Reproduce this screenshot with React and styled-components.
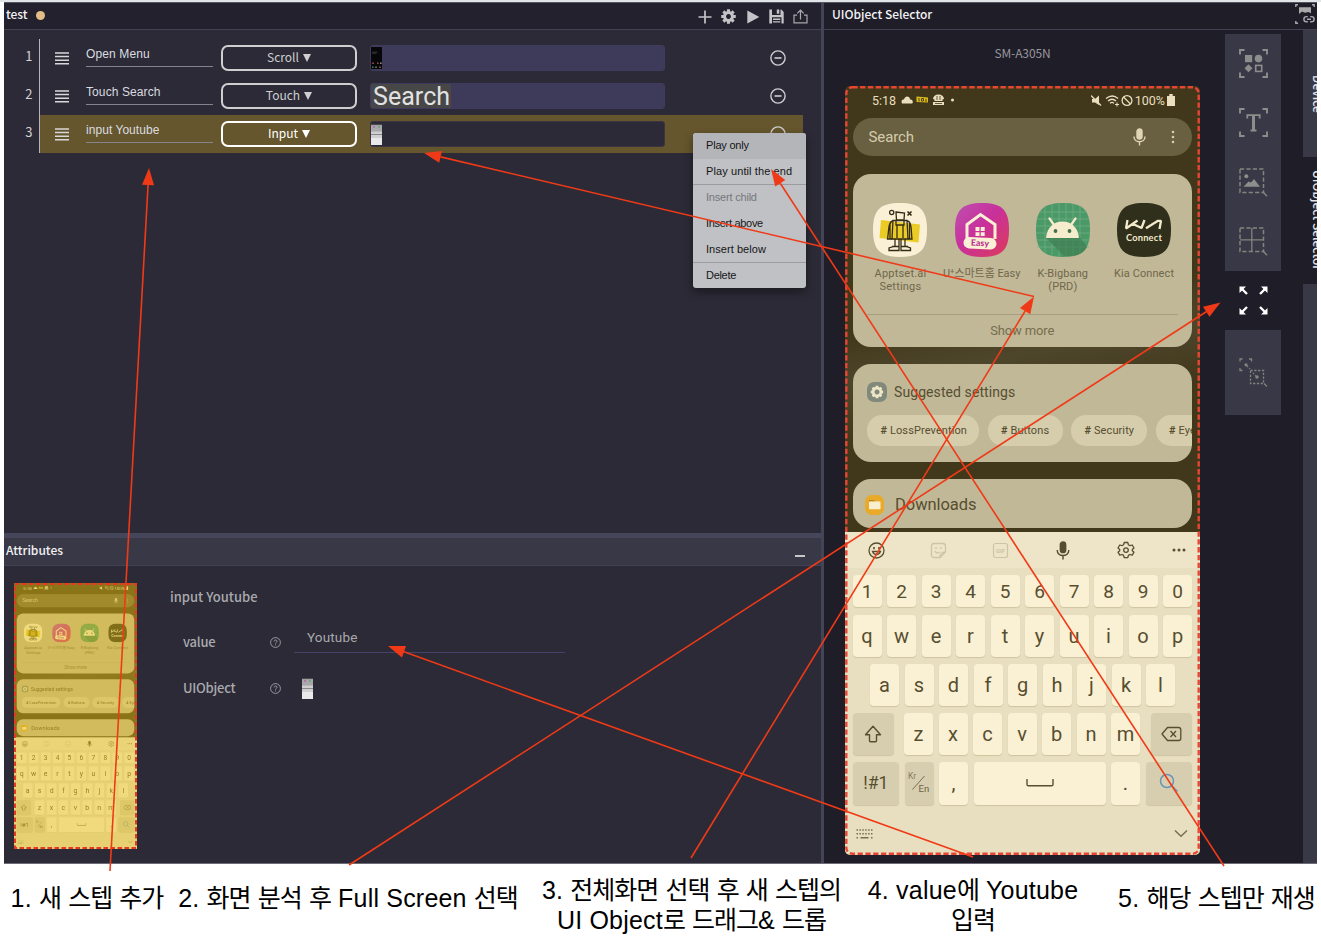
import React from "react";
import styled, { createGlobalStyle } from "styled-components";

const GlobalStyle = createGlobalStyle`
  * { box-sizing: border-box; }
  body { margin: 0; background: #fff; }
`;

const uiFont = `"Noto Sans CJK KR", "Noto Sans", sans-serif`;
const sysFont = `"Liberation Sans", Arial, sans-serif`;
const phoneFont = `Roboto, "Noto Sans CJK KR", sans-serif`;

/* ---------- shell ---------- */
const Page = styled.div`
  position: relative;
  width: 1321px;
  height: 942px;
  overflow: hidden;
  background: #fff;
  font-family: ${uiFont};
`;
const TopStrip = styled.div`
  height: 2px;
  background: #e2e5e8;
`;
const Workspace = styled.div`
  display: flex;
  height: 862px;
  margin: 0 4px;
  border-top: 1px solid #565562;
  border-bottom: 1px solid #6d6c77;
  background: #2b2a36;
`;
const LeftSide = styled.div`
  display: flex;
  flex-direction: column;
  width: 817px;
`;
const VerticalSplit = styled.div`
  width: 3px;
  background: #444459;
`;
const HorizontalSplit = styled.div`
  height: 5px;
  background: #46465b;
`;
const RightSide = styled.div`
  display: flex;
  flex-direction: column;
  flex: 1;
  background: #1f1d28;
`;
const Header = styled.header`
  display: flex;
  align-items: center;
  height: ${(p) => p.$h || 27}px;
  padding: 0 2px 4px;
  background: ${(p) => p.$bg};
  border-bottom: 1px solid #434254;
`;
const Title = styled.h2`
  margin: 0;
  padding-left: ${(p) => p.$pad || 0}px;
  font-size: 12px;
  font-weight: 500;
  line-height: 20px;
  letter-spacing: ${(p) => p.$ls || 0}px;
  color: #f2f2f4;
  white-space: nowrap;
`;
const DirtyDot = styled.span`
  width: 9px;
  height: 9px;
  margin: 3px 0 0 8px;
  border-radius: 50%;
  background: #e3bd88;
`;
const Toolbar = styled.div`
  display: flex;
  align-items: center;
  gap: 9.2px;
  margin: 5px 11px 0 auto;
`;

/* ---------- step list ---------- */
const Steps = styled.div`
  height: 503px;
  padding: 9px 18px 0 0;
`;
const Row = styled.div`
  display: flex;
  height: 38px;
`;
const RowNumber = styled.div`
  width: 36px;
  padding: 7px 6.5px 0 0;
  border-right: 1px solid #b5b5bb;
  text-align: right;
  font-size: 13px;
  line-height: 20px;
  color: #d3d3d6;
`;
const RowBody = styled.div`
  display: flex;
  align-items: center;
  flex: 1;
  padding: 0 17px 0 15px;
  background: ${(p) => (p.$active ? "#65562d" : "transparent")};
`;
const StepName = styled.div`
  width: 127px;
  height: 21px;
  margin: -3px 0 0 17px;
  border-bottom: 1px solid #85848c;
  font: 12px/16px ${sysFont};
  letter-spacing: ${(p) => p.$ls}px;
  color: #dcdce0;
`;
const ActionSelect = styled.div`
  width: 136px;
  height: 26px;
  margin-left: 8px;
  border: 2px solid ${(p) => (p.$active ? "#fff" : "#cfcfd1")};
  border-radius: 7px;
  text-align: center;
  font-size: 12px;
  line-height: 20px;
  color: ${(p) => (p.$active ? "#fff" : "#cfcfd1")};
`;
const Caret = styled.span`
  display: inline-block;
  width: 0;
  height: 0;
  margin-left: 4px;
  border: 4.5px solid transparent;
  border-top: 8px solid currentColor;
  border-bottom: 0;
`;
const ObjectSlot = styled.div`
  display: flex;
  align-items: center;
  width: 295px;
  height: 26px;
  margin: 0 auto 0 13px;
  border: 1px solid ${(p) => (p.$active ? "#3a3443" : "#3f3b5e")};
  border-radius: 3px;
  background: ${(p) => (p.$active ? "#2b2a36" : "#3e3a5a")};
`;
const SearchShot = styled.span`
  height: 24px;
  padding: 0 1px 0 2px;
  background: #474748;
  font: 25px/26px Roboto, sans-serif;
  letter-spacing: 0.05px;
  color: #e2e2e2;
`;

/* ---------- context menu ---------- */
const Menu = styled.div`
  position: absolute;
  left: 693px;
  top: 133px;
  width: 113px;
  height: 155px;
  overflow: hidden;
  border-radius: 3px;
  background: #c0c1c4;
  box-shadow: 0 4px 10px rgba(0, 0, 0, 0.4);
`;
const MenuItem = styled.div`
  height: 26px;
  padding-left: 13px;
  font: 11px/25px ${sysFont};
  letter-spacing: ${(p) => p.$ls || 0}px;
  color: ${(p) => (p.$disabled ? "#77777c" : "#161618")};
  background: ${(p) => (p.$hover ? "#b4b5b8" : "transparent")};
  border-bottom: ${(p) => (p.$rule ? "1px solid #9c9ca0" : "0")};
  white-space: nowrap;
`;

/* ---------- attributes ---------- */
const Attributes = styled.div`
  display: flex;
  flex: 1;
  padding: 17px 0 0 10px;
`;
const Minimize = styled.span`
  width: 10px;
  height: 2px;
  margin: 13px 14px 0 auto;
  background: #c6c6cb;
`;
const Thumb = styled.div`
  position: relative;
  width: 123px;
  height: 266px;
  overflow: hidden;
`;
const ThumbScale = styled.div`
  width: 355px;
  height: 769px;
  transform: scale(0.3465);
  transform-origin: 0 0;
`;
const Tint = styled.div`
  position: absolute;
  inset: 0;
  background: rgba(229, 190, 20, 0.45);
`;
const DashFrame = styled.svg`
  position: absolute;
  left: 0;
  top: 0;
`;
const Fields = styled.div`
  margin-left: 33px;
  color: #a9a9ad;
  font-weight: 500;
`;
const FieldTitle = styled.div`
  height: 26px;
  padding-top: 4px;
  font: 500 13px/20px ${uiFont};
`;
const Field = styled.div`
  display: flex;
  align-items: center;
  height: 46px;
  margin-top: ${(p) => p.$mt || 0}px;
  padding-left: 13px;
`;
const FieldLabel = styled.label`
  width: 87px;
  font-size: 13px;
  line-height: 20px;
  letter-spacing: -0.25px;
`;
const FieldInput = styled.div`
  width: 271px;
  height: 30px;
  margin: -8px 0 0 13px;
  padding-left: 13px;
  border-bottom: 1px solid #45426a;
  font: 13.5px/29px Roboto, sans-serif;
  letter-spacing: 0.15px;
`;

/* ---------- selector panel ---------- */
const SelectorBody = styled.div`
  display: flex;
  flex: 1;
  min-height: 0;
`;
const DeviceArea = styled.div`
  width: 355px;
  margin-left: 21px;
`;
const DeviceName = styled.div`
  height: 56px;
  padding: 12.5px 0 0 0;
  text-align: center;
  font-size: 12px;
  line-height: 20px;
  letter-spacing: -0.1px;
  color: #98979d;
`;
const PhoneHolder = styled.div`
  position: relative;
  width: 355px;
  height: 769px;
`;
const ToolColumn = styled.div`
  display: flex;
  flex-direction: column;
  width: 56px;
  margin: 4px 22px 0 25px;
`;
const ToolGroup = styled.div`
  background: ${(p) => (p.$plain ? "transparent" : "#393846")};
`;
const ToolCell = styled.div`
  display: flex;
  align-items: center;
  justify-content: center;
  height: ${(p) => p.$h || 59.25}px;
`;
const Tabs = styled.div`
  width: 14px;
  overflow: hidden;
`;
const Tab = styled.div`
  display: flex;
  justify-content: center;
  width: 31px;
  height: ${(p) => p.$h}px;
  writing-mode: vertical-rl;
  text-align: center;
  font-size: 12px;
  line-height: 31px;
  font-weight: 500;
  white-space: nowrap;
  color: #e6e6e8;
  background: ${(p) => (p.$active ? "#1f1d28" : "#393846")};
`;

/* ---------- phone ---------- */
const Phone = styled.div`
  display: flex;
  flex-direction: column;
  width: 355px;
  height: 769px;
  overflow: hidden;
  border-radius: 5px;
  background: linear-gradient(170deg, #41381b 30%, #4e462b 36%, #41381b 43%);
  font-family: ${phoneFont};
  color: #574e30;
`;
const StatusBar = styled.div`
  display: flex;
  flex: none;
  align-items: center;
  height: 32px;
  padding: 0 25px 4px 27px;
  font-size: 12.5px;
  color: #e9dfbf;
`;
const StatusGroup = styled.div`
  display: flex;
  align-items: center;
  gap: ${(p) => p.$gap}px;
`;
const Spacer = styled.div`
  flex: 1;
`;
const SearchBar = styled.div`
  display: flex;
  flex: none;
  align-items: center;
  height: 38px;
  margin: 0 8.5px 0 8px;
  padding: 0 14px 0 15.5px;
  border-radius: 19px;
  background: #686040;
  font-size: 15px;
  letter-spacing: -0.1px;
  color: #d6ccac;
`;
const DotsIcon = styled.svg`
  margin-left: 20px;
`;
const Card = styled.div`
  flex: none;
  height: ${(p) => p.$h}px;
  margin: ${(p) => p.$mt}px 8.5px 0 8px;
  border-radius: 18px;
  background: #c1b898;
  overflow: hidden;
`;
const AppGrid = styled.div`
  display: grid;
  grid-template-columns: repeat(4, 81.2px);
  justify-content: center;
  height: 140px;
  padding-top: 29px;
`;
const AppCell = styled.div`
  display: flex;
  flex-direction: column;
  align-items: center;
`;
const AppLabel = styled.div`
  margin-top: 9.5px;
  text-align: center;
  font-size: 11px;
  line-height: 13px;
  letter-spacing: ${(p) => p.$ls || 0.1}px;
  white-space: pre;
  color: #70674a;
`;
const ShowMore = styled.div`
  margin: 0 14px;
  border-top: 1px solid #a89f80;
  text-align: center;
  font-size: 13px;
  line-height: 32px;
  letter-spacing: -0.15px;
  color: #766d4e;
`;
const CardTitle = styled.div`
  display: flex;
  align-items: center;
  gap: ${(p) => p.$gap}px;
  height: ${(p) => p.$h}px;
  padding: ${(p) => p.$pad};
  font-size: ${(p) => p.$size}px;
  letter-spacing: ${(p) => p.$ls || 0}px;
`;
const Chips = styled.div`
  display: flex;
  gap: 8.5px;
  padding-left: 14px;
`;
const Chip = styled.div`
  flex: none;
  width: ${(p) => p.$w}px;
  height: 31px;
  padding-left: 13.5px;
  border-radius: 15px;
  background: #d6cdad;
  font-size: 11px;
  line-height: 31px;
  letter-spacing: 0.1px;
  white-space: nowrap;
  b { font-weight: 700; }
`;
const Keyboard = styled.div`
  flex: 1;
  margin-top: 4px;
  background: #e8dfc0;
`;
const KeyTools = styled.div`
  display: grid;
  grid-template-columns: repeat(5, 62.4px) 45px;
  justify-items: center;
  align-items: center;
  height: 36px;
  background: #eee5c8;
`;
const KeyRow = styled.div`
  display: flex;
  gap: 5.5px;
  height: ${(p) => p.$h}px;
  margin-top: ${(p) => p.$mt}px;
  padding-left: ${(p) => p.$pl || 7.5}px;
`;
const Key = styled.div`
  display: flex;
  align-items: center;
  justify-content: center;
  width: ${(p) => p.$w || 29}px;
  margin-left: ${(p) => p.$ml || 0}px;
  border-radius: 4px;
  background: ${(p) => (p.$dark ? "#d7ceaf" : "#faf1d4")};
  box-shadow: 0 1px 1px rgba(120, 105, 60, 0.22);
  font-size: ${(p) => p.$size || 20}px;
`;
const KeyFoot = styled.div`
  display: flex;
  align-items: center;
  justify-content: space-between;
  height: 58px;
  padding: 0 12px 0 11px;
`;

/* ---------- captions ---------- */
const Captions = styled.div`
  display: grid;
  grid-template-columns: 174px 348px 339px 224px 27px 209px;
  padding-top: 11px;
`;
const CaptionText = styled.p`
  margin: ${(p) => p.$mt || 0}px 0 0;
  grid-column: ${(p) => p.$col};
  grid-row: 1;
  text-align: center;
  font: 25px/30px "Liberation Sans", "Noto Sans CJK KR", sans-serif;
  letter-spacing: 0.2px;
  white-space: pre;
  color: #000;
`;
const Hangul = styled.span`
  letter-spacing: -1px;
`;
const Caption = ({ children, ...rest }) => (
  <CaptionText {...rest}>
    {children.split(/([가-힣]+)/).map((part, i) => (i % 2 ? <Hangul key={i}>{part}</Hangul> : part))}
  </CaptionText>
);
const ArrowLayer = styled.svg`
  position: absolute;
  left: 0;
  top: 0;
  pointer-events: none;
`;

/* ---------- icons ---------- */
const MenuLines = () => (
  <svg width="14" height="13" viewBox="0 0 14 13" stroke="#d8d8da" strokeWidth="1.5">
    <path d="M0 1H14M0 4.6H14M0 8.2H14M0 11.8H14" />
  </svg>
);
const MinusCircle = () => (
  <svg width="16" height="16" viewBox="0 0 16 16" fill="none" stroke="#cfcfd2" strokeWidth="1.4">
    <circle cx="8" cy="8" r="7.1" />
    <path d="M4.5 8H11.5" strokeWidth="1.6" />
  </svg>
);
const PlusIcon = () => (
  <svg width="14" height="14" viewBox="0 0 14 14" stroke="#c4c4c8" strokeWidth="1.7">
    <path d="M7 .5V13.5M.5 7H13.5" />
  </svg>
);
const teeth = (n, rIn, rOut, c) => {
  const pts = [];
  for (let i = 0; i < n; i++) {
    const a = (i * 2 * Math.PI) / n - Math.PI / 2;
    [[-0.3, rIn], [-0.2, rOut], [0.2, rOut], [0.3, rIn]].forEach(([d, r]) =>
      pts.push(`${(c + r * Math.cos(a + d)).toFixed(2)},${(c + r * Math.sin(a + d)).toFixed(2)}`)
    );
  }
  return `M${pts.join("L")}Z`;
};
const GearSolid = ({ size = 15, color = "#c4c4c8", hole = 2.6 }) => (
  <svg width={size} height={size} viewBox="0 0 16 16">
    <path
      fill={color}
      fillRule="evenodd"
      d={`${teeth(8, 5.8, 7.9, 8)}M8 ${8 - hole}a${hole} ${hole} 0 1 0 .01 0Z`}
    />
  </svg>
);
const PlayIcon = () => (
  <svg width="14" height="14" viewBox="0 0 14 14">
    <path d="M1.3 .5L13.3 7L1.3 13.5Z" fill="#c4c4c8" />
  </svg>
);
const SaveIcon = () => (
  <svg width="15" height="15" viewBox="0 0 15 15" fill="#c4c4c8">
    <path d="M.3 .5H3V6H11.5V.5H12.3L14.7 3V14.5H12.5V8.3H3V14.5H.3Z" />
    <path d="M7.8 .5H10.3V4.8H7.8ZM4 9.6H11.3V11H4ZM4 12.2H11.3V13.6H4Z" />
  </svg>
);
const UploadIcon = () => (
  <svg width="15" height="15" viewBox="0 0 15 15" fill="none" stroke="#a8a8ad" strokeWidth="1.2">
    <path d="M4 6.2H1V13.8H14V6.2H11M7.5 10.5V1.3M4.3 4.4L7.5 1.2L10.7 4.4" />
  </svg>
);
const HelpIcon = () => (
  <svg width="11" height="11" viewBox="0 0 11 11" fill="none" stroke="#a5a5aa" strokeWidth="0.9">
    <circle cx="5.5" cy="5.5" r="4.9" />
    <path d="M4 4.4C4 2.5 7 2.6 7 4.3C7 5.5 5.5 5.3 5.5 6.6M5.5 7.4V8.4" />
  </svg>
);
const TinyScreen = () => (
  <svg width="11" height="21" viewBox="0 0 11 21">
    <rect width="11" height="21" fill="#e9e9e9" />
    <rect width="11" height="1.5" fill="#4b4b4b" />
    <rect y="1.5" width="11" height="5" fill="#a9a9a9" />
    <rect x="2" y="2.2" width="2" height="1.5" fill="#b46aa0" />
    <rect x="7" y="2.2" width="2" height="1.5" fill="#60a585" />
    <path d="M0 7H11M0 10.5H11" stroke="#888" />
    <path d="M0 9H11" stroke="#b5b5b5" />
    <rect y="11" width="11" height="3" fill="#d0d0d0" />
  </svg>
);
const TinyDark = () => (
  <svg width="11" height="22" viewBox="0 0 11 22">
    <rect width="11" height="22" fill="#070709" />
    <path d="M1 4.5H7L5 7H1Z" fill="#27272a" />
    <g>
      <rect x="1" y="15.5" width="2" height="1.4" fill="#a04444" />
      <rect x="6" y="15.5" width="1.6" height="1.4" fill="#9a5560" />
      <rect x="9" y="15.5" width="1.6" height="1.4" fill="#999" />
      <rect x="1" y="19.5" width="1.6" height="1.4" fill="#3e8b59" />
      <rect x="4" y="19.5" width="2" height="1.4" fill="#53785b" />
      <rect x="8" y="19.5" width="2" height="1.4" fill="#8f4747" />
    </g>
  </svg>
);
const Brackets = ({ s = 29, l = 5.5 }) => (
  <path
    d={`M1 ${l}V1H${l}M${s - l} 1H${s - 1}V${l}M${s - 1} ${s - l}V${s - 1}H${s - l}M${l} ${s - 1}H1V${s - l}`}
    fill="none"
    stroke="#8d8d8b"
    strokeWidth="1.9"
  />
);
const ShapesTool = () => (
  <svg width="29" height="29" viewBox="0 0 29 29" fill="#8d8d8b">
    <Brackets />
    <rect x="6" y="6" width="7.2" height="7.2" />
    <circle cx="19.5" cy="9.6" r="3.8" />
    <path d="M9.5 15.2L13.5 19.2L9.5 23.2L5.5 19.2Z" />
    <rect x="16.7" y="16.4" width="6" height="6" fill="none" stroke="#8d8d8b" strokeWidth="1.6" />
  </svg>
);
const TextTool = () => (
  <svg width="29" height="29" viewBox="0 0 29 29">
    <Brackets />
    <path d="M8.3 10.5V7.2H20.7V10.5M14.5 7.2V22.5M11.5 22.5H17.5" fill="none" stroke="#8d8d8b" strokeWidth="1.8" />
    <path d="M13 7H16V22H13Z" fill="#8d8d8b" />
  </svg>
);
const Marquee = () => (
  <g stroke="#84847f" fill="none">
    <rect x="1" y="1" width="23.5" height="23.5" strokeWidth="1.5" strokeDasharray="4.2 2.2" />
    <path d="M24 24L28 28.2" strokeWidth="1.5" />
  </g>
);
const ImageTool = () => (
  <svg width="29" height="29" viewBox="0 0 29 29">
    <Marquee />
    <circle cx="7.3" cy="8.3" r="2" fill="#8d8d8b" />
    <path d="M4.5 18.7L9.5 13.5L12 14.5L15 11L21 18.7Z" fill="#8d8d8b" />
  </svg>
);
const GridTool = () => (
  <svg width="29" height="29" viewBox="0 0 29 29">
    <Marquee />
    <path d="M12.8 1V24.5M1 12.8H24.5" stroke="#84847f" strokeWidth="1.3" />
  </svg>
);
const ExpandTool = () => (
  <svg width="29" height="29" viewBox="0 0 29 29" fill="#fff" stroke="#fff">
    <g strokeWidth="2.4">
      <path d="M3 3L8 8M26 3L21 8M3 26L8 21M26 26L21 21" />
    </g>
    <path
      stroke="none"
      d="M.5 .5H7L.5 7ZM28.5 .5H22L28.5 7ZM.5 28.5H7L.5 22ZM28.5 28.5H22L28.5 22Z"
    />
  </svg>
);
const RegionTool = () => (
  <svg width="29" height="29" viewBox="0 0 29 29" fill="none" stroke="#84847f" strokeWidth="1.3">
    <path d="M1 3.5V1H3.5M10 1H12.5V3.5M1 10V12.5H3.5" />
    <circle cx="7" cy="6.8" r="1.6" fill="#84847f" stroke="none" />
    <path d="M8 8L11 11" strokeDasharray="1.6 1.6" />
    <rect x="11.5" y="12.5" width="13" height="13" strokeDasharray="2.2 1.6" />
    <circle cx="18" cy="19" r="1.8" fill="#84847f" stroke="none" />
    <path d="M14 15L17 18" strokeDasharray="1.6 1.6" />
    <path d="M25 25.5L28 28.5" />
  </svg>
);
const LinkImageIcon = () => (
  <svg width="20" height="20" viewBox="0 0 20 20" fill="none" stroke="#a9a9ac" strokeWidth="1.4">
    <path d="M.8 3V.8H3M17 .8H19.2V3M.8 17V19.2H3" />
    <path d="M4 3.2H16V9.2L13.5 8L10 8.8L7 7.5L4 10Z" fill="#a9a9ac" stroke="none" />
    <path d="M12.8 12.6H11.5A2.6 2.6 0 0 0 11.5 17.8H12.8M15.2 12.6H16.5A2.6 2.6 0 0 1 16.5 17.8H15.2M12 15.2H16" />
  </svg>
);

const MicIcon = ({ color, w = 13, h = 18 }) => (
  <svg width={w} height={h} viewBox="0 0 13 18" fill="none" stroke={color} strokeWidth="1.4">
    <rect x="4" y="1" width="5" height="10" rx="2.5" fill={color} />
    <path d="M1 8.5C1 15.5 12 15.5 12 8.5M6.5 14V17.5" />
  </svg>
);
const Squircle = ({ fill }) => (
  <path d="M27 0C47 0 54 7 54 27S47 54 27 54S0 47 0 27S7 0 27 0Z" fill={fill} />
);
const AppIcon = styled.svg`
  width: 54px;
  height: 54px;
  font-family: Lato, sans-serif;
`;
const RobotApp = () => (
  <AppIcon viewBox="0 0 54 54">
    <Squircle fill="#f9f0d6" />
    <path d="M8 17L47 21.5L45.5 39.5L6.5 35Z" fill="#ebcb25" />
    <g fill="none" stroke="#332c18" strokeWidth="1.3">
      <circle cx="18.7" cy="9.5" r="2.1" />
      <path d="M34.5 8.5L38.5 12.5M38.5 8.5L34.5 12.5" strokeWidth="1.6" />
      <path d="M23 9L31.5 10L31 17H23.5ZM20 17.5H34L35 36H19ZM23 17V22H31V17M24 22V35M30 22V35" />
      <path d="M20 18C15 18 16 28 14.5 36H19M34 18C39 18 38 28 39 36H35M17 20V36M36.5 20V36" />
      <path d="M22 36V43L16 45V47.5H26V36M28 36V47.5H37.5V45L32 43V36M19 43.5H26M28 43.5H35" />
    </g>
  </AppIcon>
);
const HomeApp = () => (
  <AppIcon viewBox="0 0 54 54">
    <defs>
      <linearGradient id="pink" x1="0" y1="0" x2="1" y2="1">
        <stop offset="0" stopColor="#bd52b0" />
        <stop offset=".45" stopColor="#c8309c" />
        <stop offset="1" stopColor="#dc3b58" />
      </linearGradient>
    </defs>
    <Squircle fill="url(#pink)" />
    <path d="M12 36V21.5L25.5 11.5L40 21.5V36" fill="none" stroke="#f9f0d6" strokeWidth="3" />
    <path d="M20.5 24H24.5V28H20.5ZM25.7 24H29.7V28H25.7ZM20.5 29.2H24.5V33H20.5ZM25.7 29.2H29.7V33H25.7Z" fill="#f9f0d6" />
    <rect x="8.5" y="34.5" width="33" height="11.5" rx="5.7" fill="#f9f0d6" transform="rotate(3 25 40)" />
    <text x="25" y="43" textAnchor="middle" fontSize="8.8" fontWeight="900" fill="#bb3490" transform="rotate(3 25 40)">Easy</text>
  </AppIcon>
);
const AndroidApp = () => (
  <AppIcon viewBox="0 0 54 54">
    <Squircle fill="#4c9968" />
    <path
      d="M9 4V50M16 1V53M23 0V54M30 0V54M37 1V53M44 3V51M3 9H51M1 16H53M0 23H54M0 30H54M0 37H54M1 44H53"
      stroke="#74b088"
      strokeWidth=".7"
    />
    <path d="M10 35L28 53C40 54 47 51 51 44L43 33Z" fill="#3d7c50" opacity=".65" />
    <path d="M10 35C11 24 18 18.5 26.5 18.5S42 24 43 35Z" fill="#f4eccd" />
    <path d="M13.5 15.5L18 22M39.5 15.5L35 22" stroke="#f4eccd" strokeWidth="2.2" strokeLinecap="round" />
    <circle cx="19.5" cy="28" r="1.9" fill="#45704c" />
    <circle cx="33.5" cy="28" r="1.9" fill="#45704c" />
  </AppIcon>
);
const KiaApp = () => (
  <AppIcon viewBox="0 0 54 54">
    <Squircle fill="#2f2f1c" />
    <path
      d="M10.5 17L9 25.5L20.5 17.5M15.5 20.8L24.5 25L27.5 17M29 25.3L41 17.8H44L42.5 26"
      fill="none"
      stroke="#f3eacc"
      strokeWidth="2.3"
      strokeLinejoin="bevel"
    />
    <text x="27" y="37.5" textAnchor="middle" fontSize="9.3" fontWeight="700" letterSpacing=".2" fill="#f3eacc">Connect</text>
  </AppIcon>
);

const ink = "#574e30";
const PhoneScreen = () => (
  <Phone>
    <StatusBar>
      <StatusGroup $gap={5}>
        <span>5:18</span>
        <svg width="54" height="12" viewBox="0 0 54 12">
          <path d="M1 9.5C-.5 6 2 5 3 5.5C4 1 9 2 9 5.5C12 5 12.5 9 11 9.5Z" fill="#e9dfbf" />
          <path d="M15.5 2.5L27 3.5V8.5L15.5 8Z" fill="#d9b91f" />
          <path d="M18 4V7.5M20.5 4.500H22.500V7H20.500ZM25 5V8" stroke="#514515" fill="none" />
          <path d="M32 5A5.500 4.500 0 0 1 43 5L41.500 5.500V7H33.500V5.500ZM32 8H43V11H32Z" fill="#e9dfbf" />
          <path d="M36 2V6M39 2V6M34 9.500H41" stroke="#41381b" strokeWidth=".8" />
          <circle cx="51.500" cy="6" r="1.500" fill="#e9dfbf" />
        </svg>
      </StatusGroup>
      <Spacer />
      <StatusGroup $gap={2}>
        <svg width="42" height="13" viewBox="0 0 42 13" fill="none" stroke="#e9dfbf" strokeWidth="1.300">
          <path d="M1 5H4L8 1.500V11L4 8.500H1Z" fill="#e9dfbf" stroke="none" />
          <path d="M0 1.500L10 11.500" />
          <path d="M15 4.500Q21.500 -.5 27 4.500M17 7Q21 3.500 25 7M19 9.300Q21 7.500 23 9.300" />
          <path d="M24 10.500H28M26 8.500V12.500" strokeWidth="1" />
          <circle cx="36" cy="6.500" r="4.900" />
          <path d="M32.500 3L39.500 10" />
        </svg>
        <span>100%</span>
        <svg width="8" height="12" viewBox="0 0 8 12">
          <path d="M0 2H2.300V0H5.700V2H8V12H0Z" fill="#e9dfbf" />
        </svg>
      </StatusGroup>
    </StatusBar>
    <SearchBar>
      <span>Search</span>
      <Spacer />
      <MicIcon color="#e0d6b6" />
      <DotsIcon width="12" height="16" viewBox="0 0 12 16" fill="#d6ccac">
        <circle cx="7" cy="3" r="1.300" />
        <circle cx="7" cy="8" r="1.300" />
        <circle cx="7" cy="13" r="1.300" />
      </DotsIcon>
    </SearchBar>
    <Card $h={173} $mt={18}>
      <AppGrid>
        <AppCell><RobotApp /><AppLabel $ls={0.2}>{"Apptset.ai\nSettings"}</AppLabel></AppCell>
        <AppCell><HomeApp /><AppLabel $ls={-0.05}>U⁺스마트홈 Easy</AppLabel></AppCell>
        <AppCell><AndroidApp /><AppLabel>{"K-Bigbang\n(PRD)"}</AppLabel></AppCell>
        <AppCell><KiaApp /><AppLabel $ls={0.1}>Kia Connect</AppLabel></AppCell>
      </AppGrid>
      <ShowMore>Show more</ShowMore>
    </Card>
    <Card $h={98} $mt={17}>
      <CardTitle $h={51} $gap={7} $pad="4px 0 0 14px" $size={14} $ls={0.08}>
        <svg width="20" height="20" viewBox="0 0 20 20">
          <rect width="20" height="20" rx="7" fill="#80897a" />
          <g transform="translate(3.600 3.600) scale(.8)">
            <path d={`${teeth(8, 6.5, 7.9, 8)}M8 4.800a3.200 3.200 0 1 0 .01 0Z`} fill="#efe6c8" fillRule="evenodd" />
          </g>
        </svg>
        Suggested settings
      </CardTitle>
      <Chips>
        <Chip $w={112}><b>#</b> LossPrevention</Chip>
        <Chip $w={75}><b>#</b> Buttons</Chip>
        <Chip $w={76}><b>#</b> Security</Chip>
        <Chip $w={76}><b>#</b> Eye</Chip>
      </Chips>
    </Card>
    <Card $h={49} $mt={17}>
      <CardTitle $h={49} $gap={11} $pad="2px 0 0 12px" $size={16.5} $ls={-0.05}>
        <svg width="19" height="20" viewBox="0 0 19 20">
          <rect width="19" height="20" rx="7" fill="#e8aa28" />
          <path d="M4 5H9L10 6.500H4Z" fill="#b98518" />
          <rect x="4" y="6.500" width="11.500" height="7.800" rx=".8" fill="#f9eed0" />
        </svg>
        Downloads
      </CardTitle>
    </Card>
    <Keyboard>
      <KeyTools>
        <svg width="17" height="17" viewBox="0 0 17 17" fill="none" stroke={ink} strokeWidth="1.300">
          <circle cx="8.500" cy="8.500" r="7.500" />
          <path d="M4.500 9.500C6 13.500 11 13.500 12.500 9.500Z" />
          <path d="M6 5V7.200M11 5V7.200" strokeWidth="1.600" />
        </svg>
        <svg width="17" height="17" viewBox="0 0 17 17" fill="none" stroke="#cdc4a4" strokeWidth="1.300">
          <path d="M4 1.500H13Q15.500 1.500 15.500 4V10L10 15.500H4Q1.500 15.500 1.500 13V4Q1.500 1.500 4 1.500ZM10 15.500Q9.500 10.500 15.500 10" />
          <path d="M5 9C6 11.500 8 11.500 10 10M6 5V7M11 5V7" />
        </svg>
        <svg width="17" height="17" viewBox="0 0 17 17" fill="none" stroke="#cdc4a4" strokeWidth="1.200">
          <rect x="1.500" y="1.500" width="14" height="14" rx="2" />
          <text x="8.500" y="10.800" fontSize="6" fontWeight="700" textAnchor="middle" fill="#cdc4a4" stroke="none">GIF</text>
        </svg>
        <MicIcon color={ink} w={14} h={19} />
        <svg width="18" height="18" viewBox="0 0 18 18" fill="none" stroke={ink} strokeWidth="1.300" strokeLinejoin="round">
          <path d="M7.200 1.500H10.800L11.400 3.800L13 4.700L15.200 4L17 7L15.300 8.500V9.700L17 11.200L15.200 14.200L13 13.500L11.400 14.400L10.800 16.600H7.200L6.600 14.400L5 13.500L2.800 14.200L1 11.200L2.700 9.700V8.500L1 7L2.800 4L5 4.700L6.600 3.800Z" />
          <circle cx="9" cy="9.100" r="2.300" />
        </svg>
        <svg width="16" height="4" viewBox="0 0 16 4" fill={ink}>
          <circle cx="3" cy="2" r="1.500" />
          <circle cx="8" cy="2" r="1.500" />
          <circle cx="13" cy="2" r="1.500" />
        </svg>
      </KeyTools>
      <KeyRow $h={32} $mt={7}>
        {"1234567890".split("").map((k) => <Key key={k} $size={19}>{k}</Key>)}
      </KeyRow>
      <KeyRow $h={42} $mt={8}>
        {"qwertyuiop".split("").map((k) => <Key key={k}>{k}</Key>)}
      </KeyRow>
      <KeyRow $h={42} $mt={7} $pl={25}>
        {"asdfghjkl".split("").map((k) => <Key key={k}>{k}</Key>)}
      </KeyRow>
      <KeyRow $h={42} $mt={6.5}>
        <Key $dark $w={41}>
          <svg width="18" height="18" viewBox="0 0 18 18" fill="none" stroke={ink} strokeWidth="1.400" strokeLinejoin="round">
            <path d="M9 1.200L16.500 9.800H12.500V15.500Q12.500 16.800 11.500 16.800H6.500Q5.500 16.800 5.500 15.500V9.800H1.500Z" />
          </svg>
        </Key>
        {"zxcvbnm".split("").map((k, i) => <Key key={k} $ml={i ? 0 : 5}>{k}</Key>)}
        <Key $dark $w={41} $ml={5}>
          <svg width="21" height="16" viewBox="0 0 21 16" fill="none" stroke={ink} strokeWidth="1.300" strokeLinejoin="round">
            <path d="M6.500 1.500H17.500Q19.800 1.500 19.800 3.800V12.200Q19.800 14.500 17.500 14.500H6.500L1 8Z" />
            <path d="M9.500 5L15 11M15 5L9.500 11" />
          </svg>
        </Key>
      </KeyRow>
      <KeyRow $h={43} $mt={7}>
        <Key $dark $w={46.5} $size={17.5}>!#1</Key>
        <Key $dark $w={29}>
          <svg width="24" height="26" viewBox="0 0 24 26">
            <text x="1" y="9" fontSize="8.500" fill="#857c5c">Kr</text>
            <path d="M5.500 19.500L17.500 6" stroke="#6d6445" strokeWidth=".9" />
            <text x="11.500" y="22" fontSize="9.500" fill="#6d6445">En</text>
          </svg>
        </Key>
        <Key $w={29}>,</Key>
        <Key $w={132}>
          <svg width="28" height="8" viewBox="0 0 28 8" fill="none" stroke={ink} strokeWidth="1.400">
            <path d="M1 0V5.500Q1 6.700 2.500 6.700H25.500Q27 6.700 27 5.500V0" />
          </svg>
        </Key>
        <Key $w={29}>.</Key>
        <Key $dark $w={46}>
          <svg width="20" height="20" viewBox="0 0 20 20" fill="none" stroke="#6a94ba" strokeWidth="1.500">
            <circle cx="8" cy="8" r="6.500" />
            <path d="M12.500 12.500L18.500 18.500" />
          </svg>
        </Key>
      </KeyRow>
      <KeyFoot>
        <svg width="17" height="10" viewBox="0 0 17 10" stroke="#786f50" strokeWidth="1.400">
          <path d="M.5 1H16.500M.5 4.800H16.500" strokeDasharray="1.500 1.400" />
          <path d="M.5 8.800H2M15 8.800H16.500M4.500 8.800H12.500" />
        </svg>
        <svg width="14" height="9" viewBox="0 0 14 9" fill="none" stroke="#786f50" strokeWidth="1.500">
          <path d="M1 1.500L7 7.300L13 1.500" />
        </svg>
      </KeyFoot>
    </Keyboard>
  </Phone>
);

const steps = [
  { name: "Open Menu", ls: 0.12, action: "Scroll", shot: "dark" },
  { name: "Touch Search", ls: 0.1, action: "Touch", shot: "search" },
  { name: "input Youtube", ls: 0.05, action: "Input", shot: "screen", active: true },
];

const arrows = [
  [110, 871, 149, 168],
  [349, 865, 1220.5, 302.5],
  [691, 858, 1034, 296.5],
  [1034, 296.5, 424, 153],
  [973, 857, 388, 646],
  [1224, 866, 771, 169],
];
const Arrow = ({ x1, y1, x2, y2 }) => {
  const d = Math.hypot(x2 - x1, y2 - y1);
  const ux = (x2 - x1) / d;
  const uy = (y2 - y1) / d;
  const bx = x2 - ux * 17;
  const by = y2 - uy * 17;
  return (
    <g>
      <path d={`M${x1} ${y1}L${bx} ${by}`} stroke="#f03a17" strokeWidth="1.6" />
      <path
        d={`M${x2} ${y2}L${bx - uy * 6} ${by + ux * 6}L${bx + uy * 6} ${by - ux * 6}Z`}
        fill="#f03a17"
      />
    </g>
  );
};

export default function App() {
  return (
    <Page>
      <GlobalStyle />
      <TopStrip />
      <Workspace>
        <LeftSide>
          <Header $bg="#22212d">
            <Title>test</Title>
            <DirtyDot />
            <Toolbar>
              <PlusIcon />
              <GearSolid size={15} />
              <PlayIcon />
              <SaveIcon />
              <UploadIcon />
            </Toolbar>
          </Header>
          <Steps>
            {steps.map((s, i) => (
              <Row key={s.name}>
                <RowNumber>{i + 1}</RowNumber>
                <RowBody $active={s.active}>
                  <MenuLines />
                  <StepName $ls={s.ls}>{s.name}</StepName>
                  <ActionSelect $active={s.active}>
                    {s.action}
                    <Caret />
                  </ActionSelect>
                  <ObjectSlot $active={s.active}>
                    {s.shot === "dark" && <TinyDark />}
                    {s.shot === "search" && <SearchShot>Search</SearchShot>}
                    {s.shot === "screen" && <TinyScreen />}
                  </ObjectSlot>
                  <MinusCircle />
                </RowBody>
              </Row>
            ))}
          </Steps>
          <HorizontalSplit />
          <Header $bg="#393846" $h={28}>
            <Title>Attributes</Title>
            <Minimize />
          </Header>
          <Attributes>
            <Thumb>
              <ThumbScale><PhoneScreen /></ThumbScale>
              <Tint />
              <DashFrame width="123" height="266">
                <rect x="1" y="1" width="121" height="264" fill="none" stroke="#e23a24" strokeWidth="2" strokeDasharray="4.5 2.5" />
              </DashFrame>
            </Thumb>
            <Fields>
              <FieldTitle>input Youtube</FieldTitle>
              <Field $mt={10}>
                <FieldLabel>value</FieldLabel>
                <HelpIcon />
                <FieldInput>Youtube</FieldInput>
              </Field>
              <Field>
                <FieldLabel>UIObject</FieldLabel>
                <HelpIcon />
                <svg width="21" height="1" />
                <TinyScreen />
              </Field>
            </Fields>
          </Attributes>
        </LeftSide>
        <VerticalSplit />
        <RightSide>
          <Header $bg="#1f1d28">
            <Title $pad={6}>UIObject Selector</Title>
            <Spacer />
            <LinkImageIcon />
          </Header>
          <SelectorBody>
            <DeviceArea>
              <DeviceName>SM-A305N</DeviceName>
              <PhoneHolder>
                <PhoneScreen />
                <DashFrame width="355" height="769">
                  <rect x="1.3" y="1.3" width="352.4" height="766.4" rx="6" fill="none" stroke="#e84533" strokeWidth="2.4" strokeDasharray="5.3 2.5" />
                </DashFrame>
              </PhoneHolder>
            </DeviceArea>
            <ToolColumn>
              <ToolGroup>
                <ToolCell><ShapesTool /></ToolCell>
                <ToolCell><TextTool /></ToolCell>
                <ToolCell><ImageTool /></ToolCell>
                <ToolCell><GridTool /></ToolCell>
              </ToolGroup>
              <ToolGroup $plain>
                <ToolCell $h={59}><ExpandTool /></ToolCell>
              </ToolGroup>
              <ToolGroup>
                <ToolCell $h={85}><RegionTool /></ToolCell>
              </ToolGroup>
            </ToolColumn>
            <Tabs>
              <Tab $h={127}>Device</Tab>
              <Tab $h={127} $active>UIObject Selector</Tab>
              <Tab $h={579} />
            </Tabs>
          </SelectorBody>
        </RightSide>
      </Workspace>
      <Menu>
        <MenuItem $hover $ls={-0.2}>Play only</MenuItem>
        <MenuItem $rule $ls={0.1}>Play until the end</MenuItem>
        <MenuItem $disabled $ls={-0.2}>Insert child</MenuItem>
        <MenuItem $ls={-0.3}>Insert above</MenuItem>
        <MenuItem $rule $ls={0.05}>Insert below</MenuItem>
        <MenuItem $ls={-0.3}>Delete</MenuItem>
      </Menu>
      <Captions>
        <Caption $col={1} $mt={8}>1. 새 스텝 추가</Caption>
        <Caption $col={2} $mt={8}>2. 화면 분석 후 Full Screen 선택</Caption>
        <Caption $col={3}>{"3. 전체화면 선택 후 새 스텝의\nUI Object로 드래그& 드롭"}</Caption>
        <Caption $col={4}>{"4. value에 Youtube\n입력"}</Caption>
        <Caption $col={6} $mt={8}>5. 해당 스텝만 재생</Caption>
      </Captions>
      <ArrowLayer width="1321" height="942">
        {arrows.map(([x1, y1, x2, y2]) => (
          <Arrow key={`${x1}-${x2}`} x1={x1} y1={y1} x2={x2} y2={y2} />
        ))}
      </ArrowLayer>
    </Page>
  );
}
